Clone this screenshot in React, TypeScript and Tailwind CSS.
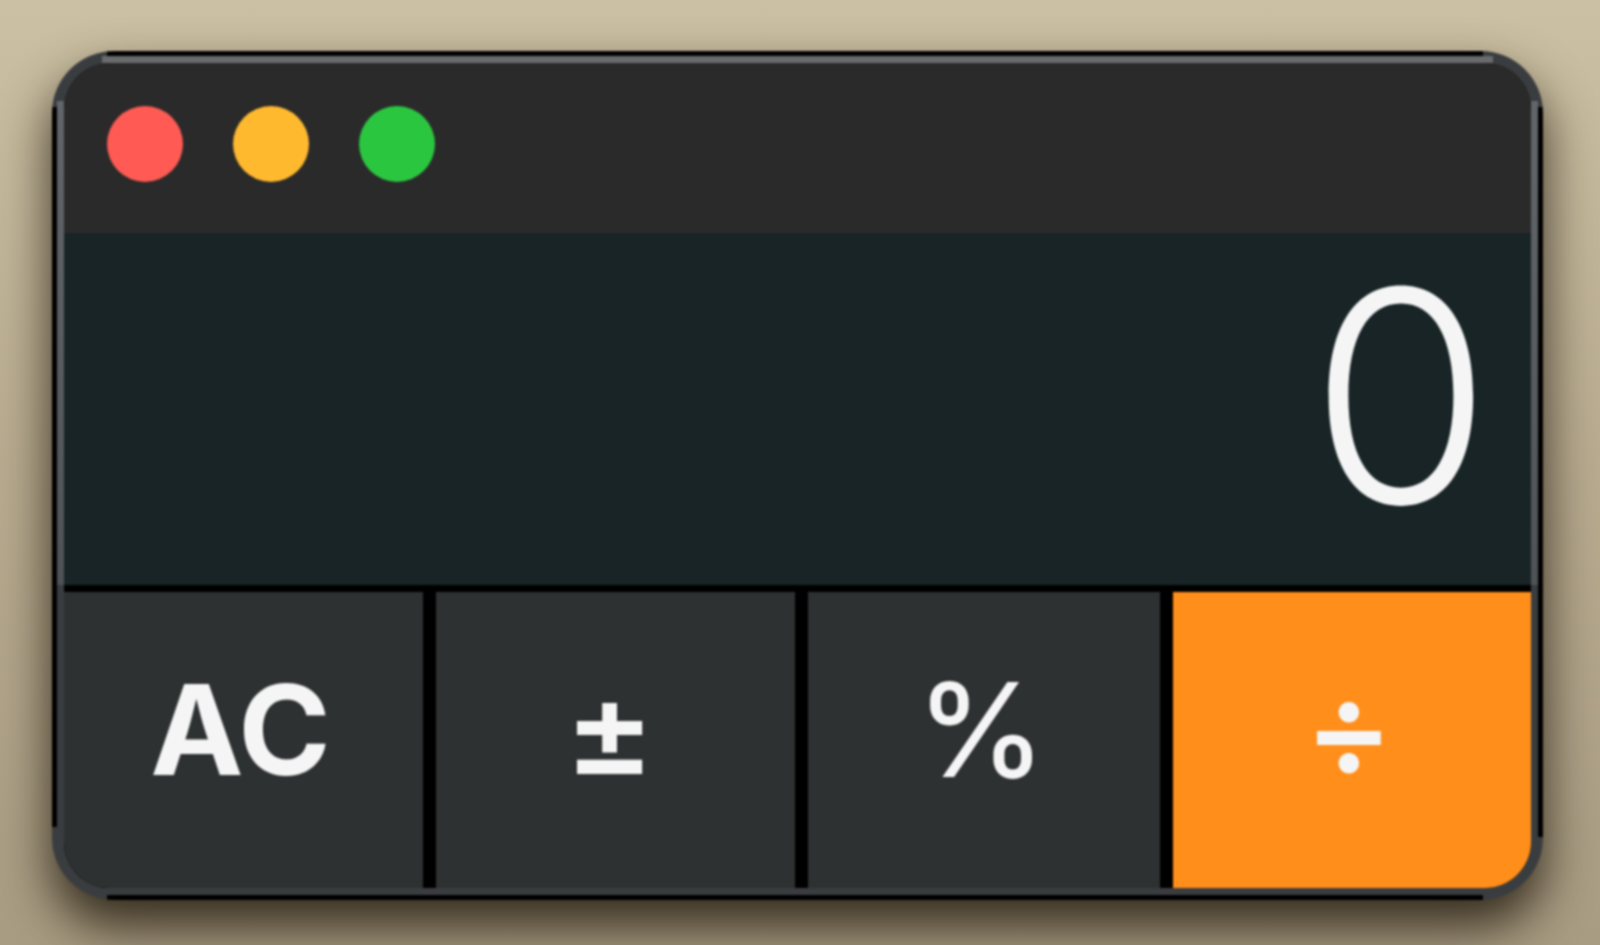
const GREY = "bg-[#2e3132]";

export default function App() {
  const keys = [
    { label: "AC", w: "w-[359px]", cls: `${GREY} text-[125px] font-[660] pb-[21px] pr-[6px]` },
    { label: "±", w: "w-[359px]", cls: `${GREY} text-[134px] font-semibold pb-[23px] pr-[12px]` },
    { label: "%", w: "w-[352px]", cls: `${GREY} text-[130px] font-medium pb-[21px] pr-[6px]` },
    { label: "÷", w: "flex-1", cls: "bg-[#ff8e1a] text-[132px] font-semibold pb-[24px] pr-[6px]" },
  ];
  return (
    <div className="h-[945px] w-[1600px] overflow-hidden bg-gradient-to-b from-[#cbc0a3] via-[#b8ab90] to-[#a89c82] pt-[51px] pl-[52px] font-['Inter','Liberation_Sans',sans-serif]">
      <div className="h-[849px] w-[1491px] rounded-[62px] p-[12px] shadow-[0_26px_50px_rgba(30,22,10,0.85)] blur-[0.8px] [background:linear-gradient(#000,#000)_55px_0/1376px_5px_no-repeat,linear-gradient(#000,#000)_55px_844px/1376px_5px_no-repeat,linear-gradient(#000,#000)_0_56px/5px_720px_no-repeat,linear-gradient(#000,#000)_1486px_56px/5px_730px_no-repeat,linear-gradient(#696b6d,#696b6d)_50px_5px/1391px_7px_no-repeat,linear-gradient(#62656a,#505356)_5px_50px/7px_484px_no-repeat,linear-gradient(#62656a,#505356)_1479px_50px/7px_484px_no-repeat,#3a3d40]">
        <div className="flex h-full flex-col overflow-hidden rounded-[46px] bg-black">
          <div className="flex h-[170px] shrink-0 items-center gap-[50px] bg-[#2a2a2a] pb-[8px] pl-[43px]">
            <span className="h-[76px] w-[76px] rounded-full bg-[#ff5a54]" />
            <span className="h-[76px] w-[76px] rounded-full bg-[#ffb92e]" />
            <span className="h-[76px] w-[76px] rounded-full bg-[#2bc640]" />
          </div>
          <div className="flex h-[352px] shrink-0 items-center justify-end bg-[#182426] pr-[39px] pb-[28px] text-[295px] leading-none font-[360] text-[#f5f5f5]">
            0
          </div>
          <div className="flex flex-1 gap-[13px] bg-black pt-[7px]">
            {keys.map((k) => (
              <button key={k.label} className={`flex items-center justify-center leading-none text-[#f5f5f5] ${k.w} ${k.cls}`}>
                {k.label}
              </button>
            ))}
          </div>
        </div>
      </div>
    </div>
  );
}
